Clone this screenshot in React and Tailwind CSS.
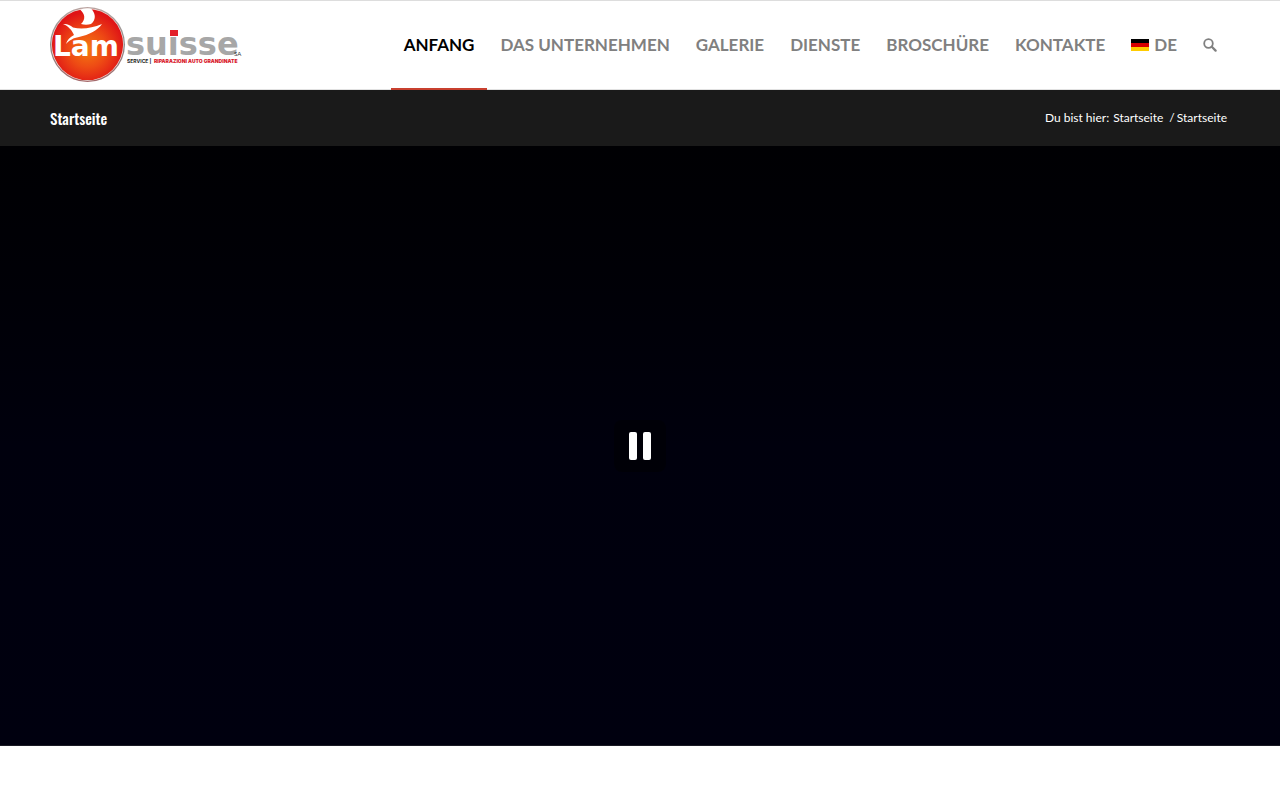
const navItems = [
  { label: "ANFANG", active: true },
  { label: "DAS UNTERNEHMEN" },
  { label: "GALERIE" },
  { label: "DIENSTE" },
  { label: "BROSCHÜRE" },
  { label: "KONTAKTE" },
];

function Logo() {
  return (
    <svg
      width="194"
      height="78"
      viewBox="0 0 194 78"
      role="img"
      aria-label="Lam Suisse"
    >
      <defs>
        <radialGradient id="ball" cx="50%" cy="56%" r="52%">
          <stop offset="0" stopColor="#f47a10" />
          <stop offset="0.5" stopColor="#ee4b14" />
          <stop offset="1" stopColor="#df1416" />
        </radialGradient>
        <linearGradient id="rim" x1="0" y1="0" x2="0" y2="1">
          <stop offset="0" stopColor="#b9a3a0" />
          <stop offset="0.5" stopColor="#8b8b8b" />
          <stop offset="1" stopColor="#a5686a" />
        </linearGradient>
      </defs>
      <circle cx="37.5" cy="38.5" r="37.5" fill="url(#rim)" />
      <circle cx="37.5" cy="38.5" r="36.2" fill="#f6e4de" />
      <circle cx="37.5" cy="38.5" r="35.6" fill="url(#ball)" />
      <path
        d="M30 3.5 C34 2.4 38 2.4 41.5 3 C46 8 46 14 41 18 C38 19 34 19 31 18 C36 13 35 8 30 3.5 Z"
        fill="#fff"
      />
      <path
        d="M13 18 C17 17.5 20 19 23 21.5 C32 24 42 22 52 18 C48 24 39 29 29 31 C23 32 20 34 16 38 C17 34 20 31 24 29 C22 24 18 20 13 18 Z"
        fill="#fff"
      />
      <text
        x="3"
        y="50"
        fill="#fff"
        className="font-['DejaVu_Sans'] text-[28px] font-bold"
      >
        Lam
      </text>
      <text
        x="76"
        y="49"
        fill="#a7a7a7"
        className="font-['DejaVu_Sans'] text-[32px] font-bold"
      >
        suisse
      </text>
      <rect x="120" y="24" width="8" height="6" fill="#e2202a" />
      <text
        x="77"
        y="57"
        fill="#222"
        className="font-['Inter'] text-[5px] font-bold"
      >
        SERVICE |
      </text>
      <text
        x="104"
        y="57"
        fill="#d9202c"
        className="font-['Inter'] text-[5px] font-black"
      >
        RIPARAZIONI AUTO GRANDINATE
      </text>
      <text x="184" y="50" fill="#333" className="font-['Lato'] text-[6px]">
        SA
      </text>
    </svg>
  );
}

function GermanFlag() {
  return (
    <svg width="18" height="12" viewBox="0 0 18 12" aria-hidden="true">
      <rect width="18" height="4" fill="#000" />
      <rect y="4" width="18" height="4" fill="#d80000" />
      <rect y="8" width="18" height="4" fill="#fc0" />
    </svg>
  );
}

function Header() {
  return (
    <header className="border-y border-t-[#ddd] border-b-[#e1e1e1] bg-white px-[50px]">
      <div className="flex h-[88px] items-center justify-between">
        <a href="#">
          <Logo />
        </a>
        <nav className="flex self-stretch text-[17px] font-bold text-[#808080]">
          {navItems.map((item) => (
            <a
              key={item.label}
              href="#"
              className={
                item.active
                  ? "-mb-px flex items-center border-b-2 border-[#c8402f] px-[13px] pt-px text-black"
                  : "flex items-center px-[13px]"
              }
            >
              {item.label}
            </a>
          ))}
          <a href="#" className="flex items-center gap-[5px] px-[13px]">
            <GermanFlag />
            DE
          </a>
          <button type="button" aria-label="Suche" className="px-[13px]">
            <svg
              width="14"
              height="14"
              viewBox="0 0 14 14"
              fill="none"
              stroke="currentColor"
            >
              <circle cx="5.5" cy="5.5" r="4.3" strokeWidth="1.8" />
              <path d="M8.8 8.8 L12.6 12.6" strokeWidth="2.3" strokeLinecap="round" />
            </svg>
          </button>
        </nav>
      </div>
    </header>
  );
}

function TitleBar() {
  return (
    <div className="flex h-14 items-center justify-between bg-[#1a1a1a] pl-[50px] pr-[53px] text-white">
      <h1 className="font-['Oswald','Liberation_Sans_Narrow',sans-serif] text-[15px] font-medium">
        <a href="#">Startseite</a>
      </h1>
      <nav className="flex text-[12px]" aria-label="Breadcrumb">
        <span className="mr-1">Du bist hier:</span>
        <a href="#">Startseite</a>
        <span className="ml-1.5 mr-0.5">/</span>
        <span>Startseite</span>
      </nav>
    </div>
  );
}

function VideoSlide() {
  return (
    <section className="flex h-[600px] items-center justify-center border-b border-[#1a1a24] bg-linear-to-b from-[#000003] via-[#00000d] to-[#00000f]">
      <button
        type="button"
        aria-label="Pause"
        className="flex size-[52px] items-center justify-center gap-[6px] rounded-lg bg-black/40"
      >
        <span className="h-7 w-2 rounded-xs bg-white" />
        <span className="h-7 w-2 rounded-xs bg-white" />
      </button>
    </section>
  );
}

export default function App() {
  return (
    <div className="min-h-screen bg-white font-['Lato',sans-serif]">
      <Header />
      <TitleBar />
      <main>
        <VideoSlide />
      </main>
    </div>
  );
}
